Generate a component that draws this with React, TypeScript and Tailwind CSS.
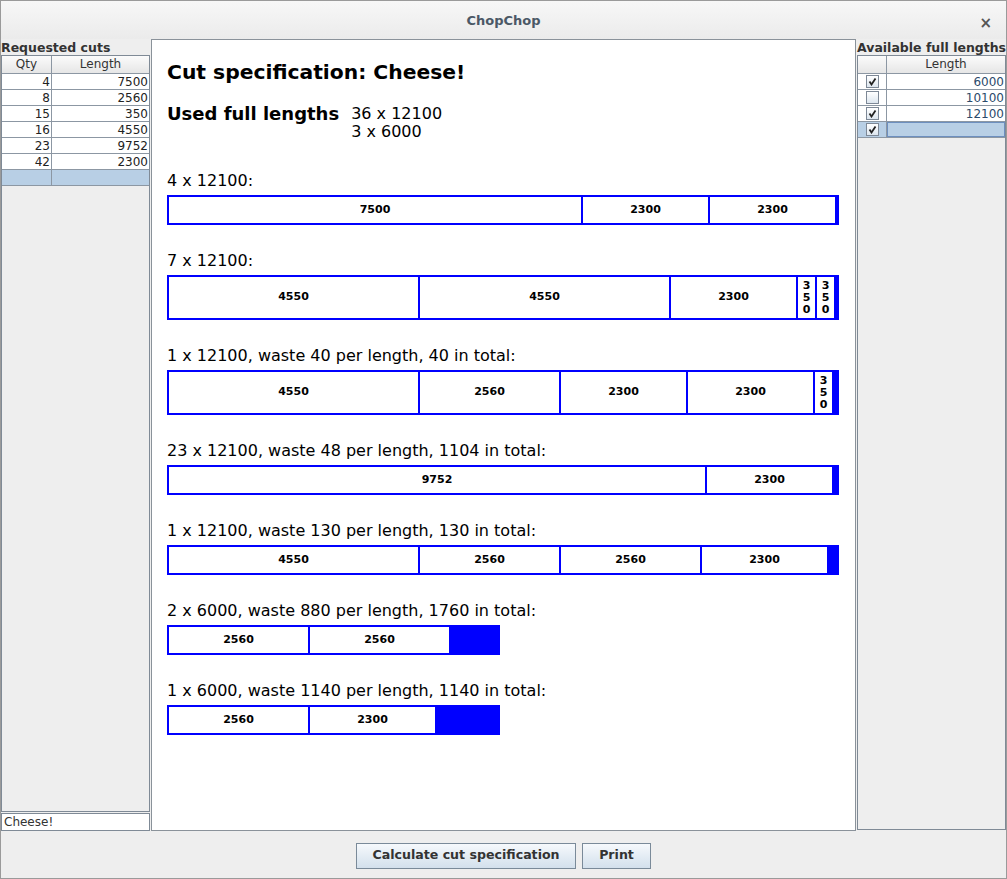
import React from "react";

const SCALE = 668 / 12100;

type Group = { label: string; full: number; cuts: number[]; tall?: boolean };

const groups: Group[] = [
  { label: "4 x 12100:", full: 12100, cuts: [7500, 2300, 2300] },
  { label: "7 x 12100:", full: 12100, cuts: [4550, 4550, 2300, 350, 350], tall: true },
  { label: "1 x 12100, waste 40 per length, 40 in total:", full: 12100, cuts: [4550, 2560, 2300, 2300, 350], tall: true },
  { label: "23 x 12100, waste 48 per length, 1104 in total:", full: 12100, cuts: [9752, 2300] },
  { label: "1 x 12100, waste 130 per length, 130 in total:", full: 12100, cuts: [4550, 2560, 2560, 2300] },
  { label: "2 x 6000, waste 880 per length, 1760 in total:", full: 6000, cuts: [2560, 2560] },
  { label: "1 x 6000, waste 1140 per length, 1140 in total:", full: 6000, cuts: [2560, 2300] },
];

const requested = [
  [4, 7500],
  [8, 2560],
  [15, 350],
  [16, 4550],
  [23, 9752],
  [42, 2300],
];

const available = [
  { on: true, len: "6000" },
  { on: false, len: "10100" },
  { on: true, len: "12100" },
];

function Bar({ g }: { g: Group }) {
  const outer = Math.round(g.full * SCALE) + (g.full === 12100 ? 4 : 2);
  return (
    <div
      className={`flex border-2 border-[#0000ff] bg-[#0000ff] ${g.tall ? "h-[45px]" : "h-[30px]"}`}
      style={{ width: outer }}
    >
      {g.cuts.map((c, i) => {
        const w = Math.round(c * SCALE);
        const narrow = w < 30;
        return (
          <div
            key={i}
            className="flex shrink-0 items-center justify-center border-r-2 border-[#0000ff] bg-white text-[11px] font-bold text-black"
            style={{ width: w }}
          >
            {narrow ? (
              <div className="flex flex-col items-center leading-[12px]">
                {String(c)
                  .split("")
                  .map((d, j) => (
                    <span key={j}>{d}</span>
                  ))}
              </div>
            ) : (
              c
            )}
          </div>
        );
      })}
    </div>
  );
}

function Check({ on }: { on: boolean }) {
  return (
    <div className="flex h-[13px] w-[13px] items-center justify-center border border-[#7d8896] bg-gradient-to-b from-white to-[#dde6ef]">
      {on && (
        <svg width="9" height="9" viewBox="0 0 9 9">
          <path d="M1.5 4.5 L3.5 7.5 L7.5 1.5" stroke="#222" strokeWidth="1.8" fill="none" />
        </svg>
      )}
    </div>
  );
}

export default function App() {
  return (
    <div className="flex h-[879px] w-[1007px] flex-col border border-[#9a9a9a] bg-[#eeeeee] font-['DejaVu_Sans',sans-serif] text-[#333]">
      {/* Title bar */}
      <div className="relative flex h-[38px] shrink-0 items-center justify-center bg-gradient-to-b from-[#f7f7f7] to-[#ebebeb] pt-[2px]">
        <span className="text-[13px] font-bold text-[#4b5866]">ChopChop</span>
        <span className="absolute right-[14px] top-[11px] text-[15px] font-bold text-[#555]">×</span>
      </div>

      <div className="flex h-[792px] shrink-0">
        {/* Left panel */}
        <div className="flex w-[149px] flex-col">
          <div className="h-[16px] whitespace-nowrap pt-[1px] text-[12.5px] font-bold leading-[15px] text-[#333]">Requested cuts</div>
          <div className="flex-1 border border-[#7f8a96] bg-[#eeeeee]">
            <div className="flex h-[18px] border-b border-[#8c97a3] bg-gradient-to-b from-[#fbfbfb] to-[#e6e6e6] text-[12px] leading-[17px]">
              <div className="w-[50px] border-r border-[#8c97a3] text-center">Qty</div>
              <div className="flex-1 text-center">Length</div>
            </div>
            {requested.map(([q, l]) => (
              <div key={q} className="flex h-[16px] border-b border-[#8c97a3] bg-white text-[12px] leading-[16px] text-[#222]">
                <div className="w-[50px] border-r border-[#8c97a3] pr-[1px] text-right">{q}</div>
                <div className="flex-1 pr-[1px] text-right">{l}</div>
              </div>
            ))}
            <div className="flex h-[16px] border-b border-[#8c97a3] bg-[#b8cfe5]">
              <div className="w-[50px] border-r border-[#8c97a3]" />
              <div className="flex-1" />
            </div>
          </div>
          <div className="mt-[1px] h-[18px] border border-[#7f8a96] bg-white pl-[2px] text-[12px] leading-[17px] text-[#333]">
            Cheese!
          </div>
        </div>

        {/* Center panel */}
        <div className="ml-[1px] w-[705px] border border-[#8a929a] bg-white pl-[15px] pt-[19px] text-black">
          <div className="text-[20.3px] font-bold leading-[26px]">Cut specification: Cheese!</div>
          <div className="mt-[19px] flex items-start">
            <div className="text-[18px] font-bold leading-[20px]">Used full lengths</div>
            <div className="ml-[12px] pt-[1px] text-[16px] leading-[18px]">
              <div>36 x 12100</div>
              <div>3 x 6000</div>
            </div>
          </div>
          <div className="mt-[30px] flex flex-col gap-[26px]">
            {groups.map((g, i) => (
              <div key={i} className="flex flex-col gap-[5px]">
                <div className="text-[16px] leading-[19px]">{g.label}</div>
                <Bar g={g} />
              </div>
            ))}
          </div>
        </div>

        {/* Right panel */}
        <div className="ml-[1px] flex w-[149px] flex-col">
          <div className="h-[16px] whitespace-nowrap pt-[1px] text-[12.5px] font-bold leading-[15px] text-[#333]">Available full lengths</div>
          <div className="mb-[1px] flex-1 border border-[#7f8a96] bg-[#eeeeee]">
            <div className="flex h-[18px] border-b border-[#8c97a3] bg-gradient-to-b from-[#fbfbfb] to-[#e6e6e6] text-[12px] leading-[17px]">
              <div className="w-[29px] border-r border-[#8c97a3]" />
              <div className="flex-1 text-center">Length</div>
            </div>
            {available.map((a) => (
              <div key={a.len} className="flex h-[16px] border-b border-[#8c97a3] bg-white text-[12px] leading-[16px] text-[#2b4a6b]">
                <div className="flex w-[29px] items-center justify-center border-r border-[#8c97a3]">
                  <Check on={a.on} />
                </div>
                <div className="flex-1 pr-[1px] text-right">{a.len}</div>
              </div>
            ))}
            <div className="flex h-[16px] border-b border-[#8c97a3] bg-[#b8cfe5]">
              <div className="flex w-[29px] items-center justify-center border-r border-[#8c97a3]">
                <Check on={true} />
              </div>
              <div className="flex-1 border border-[#6d8fbf]" />
            </div>
          </div>
        </div>
      </div>

      {/* Bottom buttons */}
      <div className="flex flex-1 items-center justify-center gap-[6px] pt-[2px]">
        <button className="h-[26px] w-[220px] border border-[#7a8a99] bg-gradient-to-b from-[#f6f9fc] to-[#d3e0ec] text-[12.6px] font-bold text-[#333]">
          Calculate cut specification
        </button>
        <button className="h-[26px] w-[69px] border border-[#7a8a99] bg-gradient-to-b from-[#f6f9fc] to-[#d3e0ec] text-[12.6px] font-bold text-[#333]">
          Print
        </button>
      </div>
    </div>
  );
}
